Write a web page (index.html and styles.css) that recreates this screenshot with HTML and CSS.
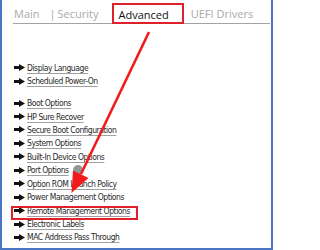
FILE: index.html
```html
<!DOCTYPE html>
<html>
<head>
<meta charset="utf-8">
<link rel="stylesheet" href="styles.css">
</head>
<body>
<div class="frame">
  <div class="tabs">
    <span class="tab tab-main">Main</span>
    <span class="tab sep">|</span>
    <span class="tab tab-sec">Security</span>
    <span class="tab active">Advanced</span>
    <span class="tab tab-uefi">UEFI Drivers</span>
  </div>
  <ul class="menu">
    <li class="item"><svg class="ico" viewBox="0 0 11 7"><rect x="0" y="2" width="6" height="3"/><polygon points="5,0 11,3.5 5,7"/></svg><span class="lnk">Display Language</span></li>
    <li class="item"><svg class="ico" viewBox="0 0 11 7"><rect x="0" y="2" width="6" height="3"/><polygon points="5,0 11,3.5 5,7"/></svg><span class="lnk">Scheduled Power-On</span></li>
    <li class="item group"><svg class="ico" viewBox="0 0 11 7"><rect x="0" y="2" width="6" height="3"/><polygon points="5,0 11,3.5 5,7"/></svg><span class="lnk">Boot Options</span></li>
    <li class="item"><svg class="ico" viewBox="0 0 11 7"><rect x="0" y="2" width="6" height="3"/><polygon points="5,0 11,3.5 5,7"/></svg><span class="lnk">HP Sure Recover</span></li>
    <li class="item"><svg class="ico" viewBox="0 0 11 7"><rect x="0" y="2" width="6" height="3"/><polygon points="5,0 11,3.5 5,7"/></svg><span class="lnk">Secure Boot Configuration</span></li>
    <li class="item"><svg class="ico" viewBox="0 0 11 7"><rect x="0" y="2" width="6" height="3"/><polygon points="5,0 11,3.5 5,7"/></svg><span class="lnk">System Options</span></li>
    <li class="item"><svg class="ico" viewBox="0 0 11 7"><rect x="0" y="2" width="6" height="3"/><polygon points="5,0 11,3.5 5,7"/></svg><span class="lnk">Built-In Device Options</span></li>
    <li class="item"><svg class="ico" viewBox="0 0 11 7"><rect x="0" y="2" width="6" height="3"/><polygon points="5,0 11,3.5 5,7"/></svg><span class="lnk">Port Options</span><span class="dot"></span></li>
    <li class="item"><svg class="ico" viewBox="0 0 11 7"><rect x="0" y="2" width="6" height="3"/><polygon points="5,0 11,3.5 5,7"/></svg><span class="lnk">Option ROM Launch Policy</span></li>
    <li class="item"><svg class="ico" viewBox="0 0 11 7"><rect x="0" y="2" width="6" height="3"/><polygon points="5,0 11,3.5 5,7"/></svg><span class="lnk plain">Power Management Options</span></li>
    <li class="item marked"><svg class="ico" viewBox="0 0 11 7"><rect x="0" y="2" width="6" height="3"/><polygon points="5,0 11,3.5 5,7"/></svg><span class="lnk">Remote Management Options</span></li>
    <li class="item"><svg class="ico" viewBox="0 0 11 7"><rect x="0" y="2" width="6" height="3"/><polygon points="5,0 11,3.5 5,7"/></svg><span class="lnk">Electronic Labels</span></li>
    <li class="item"><svg class="ico" viewBox="0 0 11 7"><rect x="0" y="2" width="6" height="3"/><polygon points="5,0 11,3.5 5,7"/></svg><span class="lnk">MAC Address Pass Through</span></li>
  </ul>
  <svg class="callout" viewBox="0 0 273 250">
    <line x1="149" y1="32" x2="81" y2="174" stroke="#f21b1b" stroke-width="2.6"/>
    <polygon points="71.5,193 88.5,178 73,170.5" fill="#f21b1b"/>
  </svg>
</div>
</body>
</html>
```

FILE: styles.css
```css
html, body {
  margin: 0;
  padding: 0;
  background: #ffffff;
}

.frame {
  position: relative;
  width: 273px;
  height: 250px;
  box-sizing: border-box;
  border: 2px solid #4a74c4;
  border-top: none;
  background: #ffffff;
  overflow: hidden;
}

.tabs {
  display: flex;
  align-items: flex-end;
  height: 24px;
  box-sizing: border-box;
  margin-left: 11px;
  margin-right: 1px;
  border-bottom: 1px solid #a3a3a3;
  font-family: "Open Sans", "Noto Sans", sans-serif;
  font-size: 11px;
  line-height: 15px;
  color: #a9a9a9;
}

.tab {
  padding-bottom: 2px;
  white-space: nowrap;
}

.tab-main {
  margin-left: 1px;
}

.sep {
  margin-left: 10px;
}

.tab-sec {
  margin-left: 2px;
}

.active {
  align-self: flex-start;
  margin-top: 3px;
  margin-left: 13px;
  height: 21px;
  box-sizing: border-box;
  border: 2px solid #e0202b;
  padding: 2px 13px 0 5px;
  margin-bottom: -1px;
  color: #111111;
}

.tab-uefi {
  margin-left: 7px;
}

.menu {
  list-style: none;
  margin: 0;
  padding: 37px 0 0 12px;
  font-family: "DejaVu Sans Condensed", "DejaVu Sans", sans-serif;
  font-size: 8.5px;
  color: #2a2a2a;
}

.item {
  position: relative;
  display: flex;
  align-items: center;
  height: 13.45px;
}

.group {
  margin-top: 8.5px;
}

.ico {
  width: 11px;
  height: 7px;
  margin-right: 2px;
  fill: #111111;
  flex: none;
}

.lnk {
  white-space: nowrap;
  letter-spacing: -0.45px;
  text-decoration: underline;
  text-decoration-color: #a0a0a0;
  text-underline-offset: 2px;
}

.plain {
  text-decoration: none;
}

.dot {
  width: 10px;
  height: 10px;
  border-radius: 50%;
  background: #8e9a96;
  margin-left: 4px;
  flex: none;
}

.marked::after {
  content: "";
  position: absolute;
  left: -3px;
  top: 2px;
  width: 127px;
  height: 14px;
  box-sizing: border-box;
  border: 2px solid #e0202b;
}

.callout {
  position: absolute;
  left: -2px;
  top: 0;
  width: 273px;
  height: 250px;
  pointer-events: none;
}
```
